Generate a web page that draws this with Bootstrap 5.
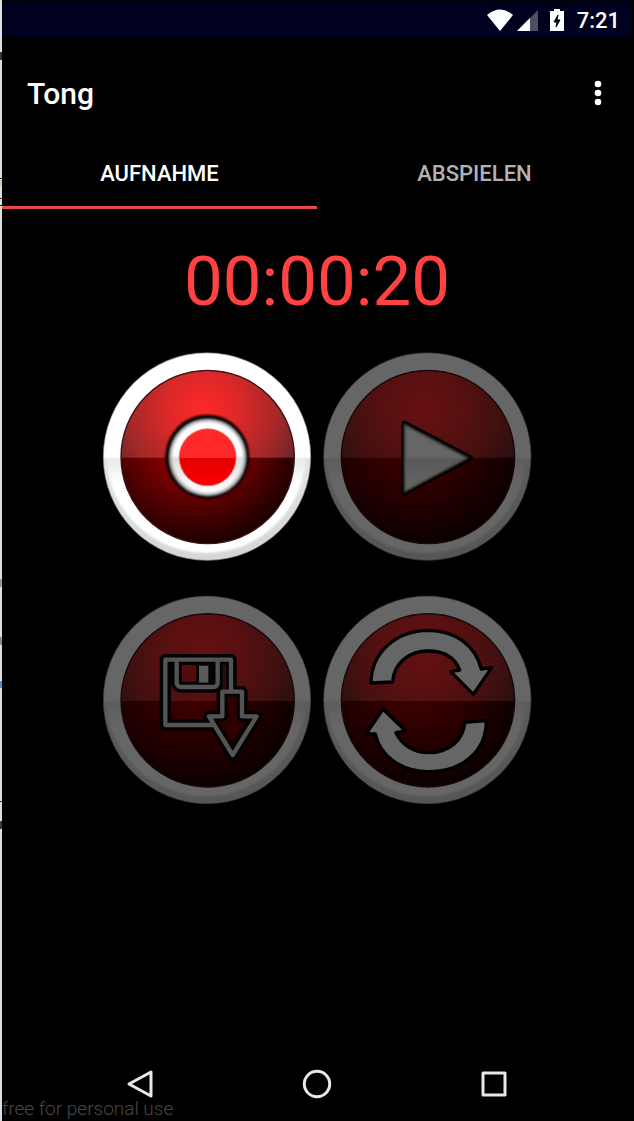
<!DOCTYPE html>
<html lang="de">
<head>
<meta charset="utf-8">
<meta name="viewport" content="width=device-width, initial-scale=1">
<title>Tong</title>
<link href="https://cdn.jsdelivr.net/npm/bootstrap@5.3.0/dist/css/bootstrap.min.css" rel="stylesheet">
<style>
  body { background: #000; color: #fff; font-family: Roboto, sans-serif; }
  .desk-edge {
    width: 2px;
    background:
      linear-gradient(#45304a, #45304a) 0 52px / 2px 8px no-repeat,
      linear-gradient(#e0c9a0, #e0c9a0) 0 180px / 2px 6px no-repeat,
      linear-gradient(#222, #222) 0 178px / 2px 1px no-repeat,
      linear-gradient(#222, #222) 0 198px / 2px 1px no-repeat,
      linear-gradient(#222, #222) 0 205px / 2px 1px no-repeat,
      linear-gradient(#8c9cad, #8c9cad) 0 579px / 2px 8px no-repeat,
      linear-gradient(#8c8c8c, #8c8c8c) 0 637px / 2px 8px no-repeat,
      linear-gradient(#5f8fbd, #5f8fbd) 0 681px / 2px 7px no-repeat,
      linear-gradient(#222, #222) 0 801px / 2px 1px no-repeat,
      linear-gradient(#4a3530, #4a3530) 0 821px / 2px 8px no-repeat,
      #dcdfe0;
  }
  .screen { padding-right: 2px; min-width: 0; }
  .status-bar { height: 38px; background: #00001f; border-top: 1px solid #000; padding: 2px 12px 0 0; font-size: 22px; font-weight: 500; line-height: 36px; }
  .app-bar { height: 110px; padding: 2px 24px 0 25px; }
  .app-title { font-size: 30px; font-weight: 500; line-height: 36px; }
  .plain-btn { background: none; border: 0; padding: 0; color: inherit; line-height: 0; }
  .tab-strip .nav-link { height: 61px; padding: 11px 0 0; border-radius: 0; border-bottom: 3px solid transparent; color: #b2b2b2; font-size: 22px; font-weight: 500; line-height: 30px; }
  .tab-strip .nav-link.active { color: #fff; border-color: #e34b4b; }
  .timer { color: #ff4242; font-size: 69px; line-height: 80px; margin-top: 33px; }
  .controls { display: grid; grid-template-columns: 220px 220px; row-gap: 23px; justify-content: center; margin-top: 25px; }
  .controls svg { width: 220px; height: 220px; }
  .controls button:disabled { opacity: .4; }
  .nav-keys { display: grid; grid-template-columns: repeat(3, 28%); justify-content: center; height: 74px; }
  .watermark { left: 0; bottom: 0; color: #484848; font-size: 19px; font-weight: 300; line-height: 24px; pointer-events: none; }
</style>
</head>
<body>
<svg width="0" height="0" class="position-absolute" aria-hidden="true">
  <defs>
    <radialGradient id="glossTop" gradientUnits="userSpaceOnUse" cx="325" cy="195" r="320">
      <stop offset="0" stop-color="#ff2828"/><stop offset=".35" stop-color="#dc2828"/><stop offset=".7" stop-color="#a42828"/><stop offset="1" stop-color="#602626"/>
    </radialGradient>
    <radialGradient id="glossLow" gradientUnits="userSpaceOnUse" cx="300" cy="270" r="350">
      <stop offset="0" stop-color="#ac0000"/><stop offset=".3" stop-color="#8a0000"/><stop offset=".6" stop-color="#580000"/><stop offset="1" stop-color="#120000"/>
    </radialGradient>
    <linearGradient id="rim" x1="0" y1="0" x2="0" y2="1">
      <stop offset="0" stop-color="#fff"/><stop offset=".505" stop-color="#fff"/><stop offset=".506" stop-color="#e4e4e4"/><stop offset="1" stop-color="#d6d6d6"/>
    </linearGradient>
    <linearGradient id="rimFace" x1="0" y1="0" x2="0" y2="1">
      <stop offset="0" stop-color="#fff"/><stop offset=".523" stop-color="#fff"/><stop offset=".524" stop-color="#e8e8e8"/><stop offset=".65" stop-color="#fff"/><stop offset="1" stop-color="#fff"/>
    </linearGradient>
    <linearGradient id="silver" x1="0" y1="0" x2="0" y2="1">
      <stop offset="0" stop-color="#fff"/><stop offset=".5" stop-color="#fff"/><stop offset=".501" stop-color="#dedede"/><stop offset="1" stop-color="#fff"/>
    </linearGradient>
    <linearGradient id="dot" x1="0" y1="0" x2="0" y2="1">
      <stop offset="0" stop-color="#ff2828"/><stop offset=".515" stop-color="#ff2828"/><stop offset=".516" stop-color="#df0000"/><stop offset="1" stop-color="#ff0000"/>
    </linearGradient>
    <filter id="soft" color-interpolation-filters="sRGB" x="-20%" y="-20%" width="140%" height="140%"><feGaussianBlur stdDeviation="3"/></filter>
    <filter id="softer" color-interpolation-filters="sRGB" x="-20%" y="-20%" width="140%" height="140%"><feGaussianBlur stdDeviation="6"/></filter>
    <g id="disc">
      <circle cx="336" cy="335" r="311" fill="url(#rim)" stroke="#999" stroke-width="2"/>
      <circle cx="333" cy="325" r="299" fill="url(#rimFace)" filter="url(#soft)"/>
      <circle cx="338" cy="336" r="260" fill="url(#glossLow)"/>
      <path d="M78 338a260 260 0 0 1 520 0z" fill="url(#glossTop)"/>
      <circle cx="338" cy="336" r="260" fill="none" stroke="#401418" stroke-width="4"/>
    </g>
  </defs>
</svg>

<div class="d-flex min-vh-100">
  <div class="desk-edge flex-shrink-0"></div>
  <div class="screen flex-grow-1 d-flex flex-column position-relative">

    <header>
      <div class="status-bar d-flex justify-content-end align-items-center">
        <svg width="78" height="24" viewBox="0 0 78 24" class="me-2" aria-hidden="true">
          <path d="M0 6Q13-5 26 6L13 22z" fill="#fff"/>
          <path d="M51 1v21H30z" fill="#4f4f63"/><path d="M43 9v13H30z" fill="#fff"/>
          <path d="M67 0h6v2h4v20H63V2h4z" fill="#fff"/>
          <path d="M71 6l-4 7h3l-1 5 4-7h-3z" fill="#00001f" stroke="#00001f"/>
        </svg>
        <span class="ms-1">7:21</span>
      </div>
      <div class="app-bar d-flex justify-content-between align-items-center">
        <h1 class="app-title mb-0">Tong</h1>
        <button type="button" class="plain-btn" aria-label="Menü">
          <svg width="20" height="28" viewBox="0 0 20 28" fill="#fff"><circle cx="10" cy="4" r="3.3"/><circle cx="10" cy="13" r="3.3"/><circle cx="10" cy="22" r="3.3"/></svg>
        </button>
      </div>
      <nav class="tab-strip nav nav-fill flex-nowrap">
        <a class="nav-link active w-50" href="#aufnahme" aria-current="page">AUFNAHME</a>
        <a class="nav-link w-50" href="#abspielen">ABSPIELEN</a>
      </nav>
    </header>

    <main class="flex-grow-1" id="aufnahme">
      <div class="timer text-center">00:00:20</div>
      <div class="controls">
        <button type="button" class="plain-btn" aria-label="Aufnehmen">
          <svg viewBox="6 6 660 660">
            <use href="#disc"/>
            <circle cx="337" cy="335" r="126" fill="#000" filter="url(#soft)"/>
            <circle cx="338" cy="337" r="116" fill="#999" filter="url(#soft)"/>
            <circle cx="338" cy="337" r="109" fill="url(#silver)" filter="url(#softer)"/>
            <circle cx="338" cy="337" r="104" fill="url(#silver)" filter="url(#soft)"/>
            <circle cx="338" cy="337" r="87" fill="#e08080"/>
            <circle cx="338" cy="337" r="84" fill="url(#dot)"/>
          </svg>
        </button>
        <button type="button" class="plain-btn" aria-label="Wiedergabe" disabled>
          <svg viewBox="5 6 660 660">
            <use href="#disc"/>
            <path d="M267 236L463 339 267 442z" fill="#000" stroke="#000" stroke-width="18" stroke-linejoin="round"/>
            <path d="M269 241L454 339 269 438z" fill="#ccc" stroke="#ccc" stroke-width="6" filter="url(#soft)"/>
            <path d="M272 247L446 339 272 433z" fill="url(#silver)" filter="url(#soft)"/>
          </svg>
        </button>
        <button type="button" class="plain-btn" aria-label="Speichern" disabled>
          <svg viewBox="6 5 660 660" fill="none" stroke-linejoin="round">
            <use href="#disc"/>
            <g stroke="#080808" stroke-width="34">
              <path d="M408 305V214H211V410H360"/>
              <path d="M245 218V280Q245 296 260 296H355Q368 296 368 280V218"/>
              <path d="M382 310H441V384H485L413 500 342 384H382z"/>
            </g>
            <path d="M303 225h48v60h-48z" fill="#080808"/>
            <path d="M261 230h41v50h-41z" fill="#d41a1e"/>
            <path d="M383 230h10v72h-10z" fill="#801a1e"/>
            <path d="M400 325h24v78h20L413 455 383 403h17z" fill="#780000"/>
            <g stroke="#d2d2d2" stroke-width="13">
              <path d="M408 305V214H211V410H355"/>
              <path d="M245 218V280Q245 296 260 296H355Q368 296 368 280V218"/>
              <path d="M382 310H441V384H485L413 500 342 384H382z"/>
            </g>
            <path d="M312 232h28v51h-28z" fill="#e0e0e0"/>
          </svg>
        </button>
        <button type="button" class="plain-btn" aria-label="Zurücksetzen" disabled>
          <svg viewBox="5 5 660 660" fill="#fff" stroke-linejoin="round">
            <use href="#disc"/>
            <g stroke="#000" stroke-width="10">
              <path d="M167 284C168 190 245 127 338 126C420 127 480 170 498 242L529 238 474 318 406 250 433 245C418 206 385 188 338 188C280 188 235 225 232 281z"/>
              <path d="M203 362L271 428 242 433C260 470 295 493 340 493C400 493 445 455 448 402L513 397C513 490 440 550 340 550C260 550 195 505 180 437L152 437z"/>
            </g>
          </svg>
        </button>
      </div>
    </main>

    <footer class="nav-keys">
      <button type="button" class="plain-btn" aria-label="Zurück">
        <svg width="30" height="30" viewBox="0 0 30 30" fill="none" stroke="#e8e8e8" stroke-width="3" stroke-linejoin="round"><path d="M3 15L25 3V27z"/></svg>
      </button>
      <button type="button" class="plain-btn" aria-label="Startseite">
        <svg width="30" height="30" viewBox="0 0 30 30" fill="none" stroke="#e8e8e8" stroke-width="3"><circle cx="15" cy="15" r="12.7"/></svg>
      </button>
      <button type="button" class="plain-btn" aria-label="Übersicht">
        <svg width="30" height="30" viewBox="0 0 30 30" fill="none" stroke="#e8e8e8" stroke-width="3" stroke-linejoin="round"><path d="M5 4h22v22H5z"/></svg>
      </button>
    </footer>
    <div class="watermark position-absolute">free for personal use</div>
  </div>
</div>
<script src="https://cdn.jsdelivr.net/npm/bootstrap@5.3.0/dist/js/bootstrap.bundle.min.js"></script>
</body>
</html>
